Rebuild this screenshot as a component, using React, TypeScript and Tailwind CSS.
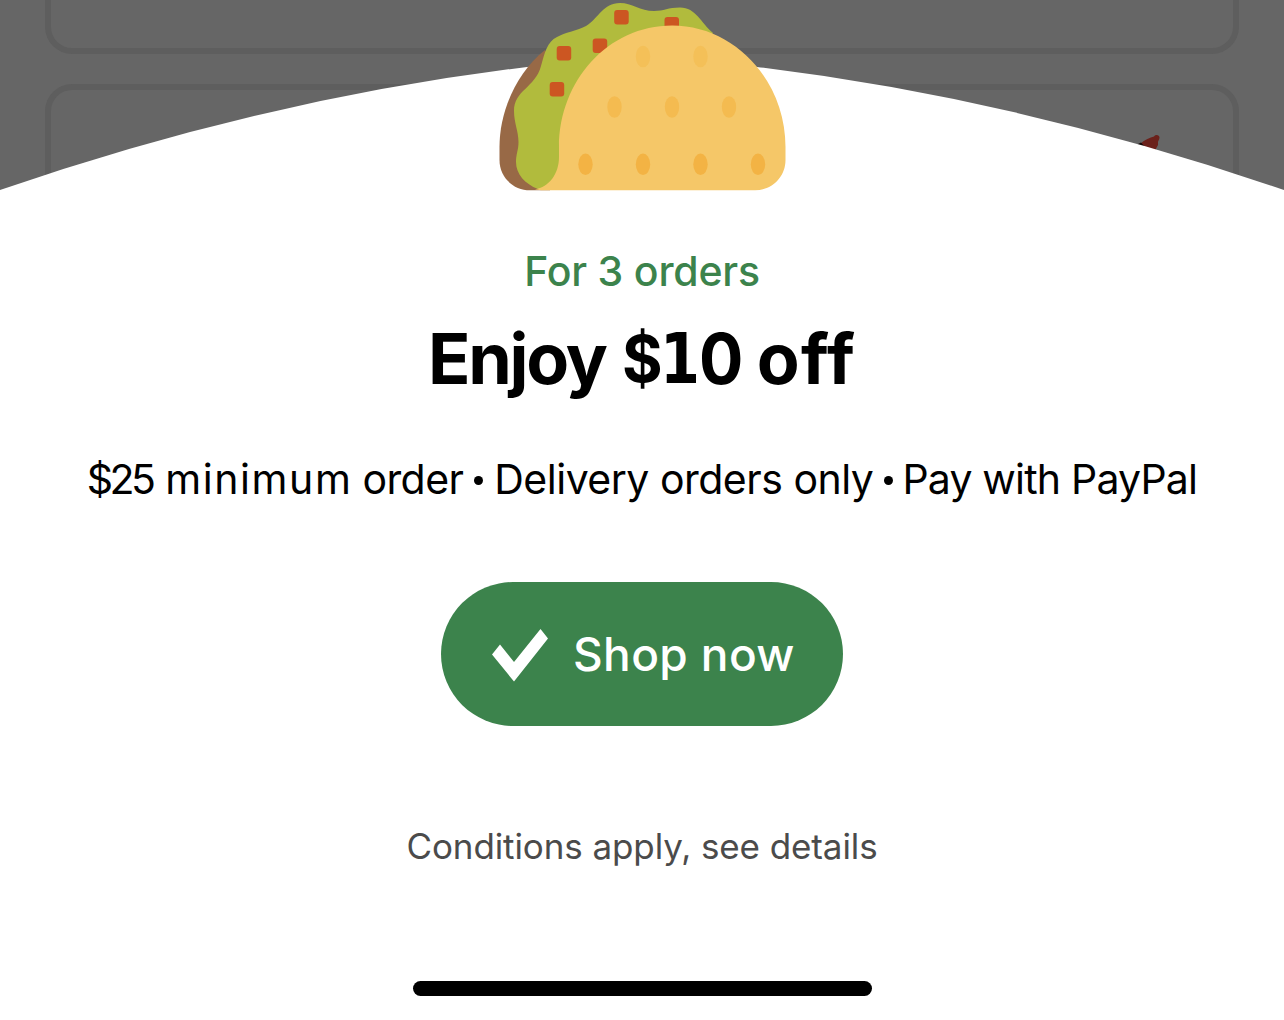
interface Point {
    x: number;
    y: number;
}

const TOMATOES: Point[] = [
    { x: 614.2, y: 10 },
    { x: 592.7, y: 38.5 },
    { x: 556.7, y: 46 },
    { x: 549.7, y: 82 },
    { x: 664.5, y: 17 },
];

// Toasted spots on the shell, darker towards the bottom
const SPOTS: (Point & { fill: string })[] = [
    { x: 643, y: 56.5, fill: "#f4c058" },
    { x: 700.5, y: 56.5, fill: "#f4c058" },
    { x: 614.5, y: 107, fill: "#f4bb50" },
    { x: 672, y: 107, fill: "#f4bb50" },
    { x: 729, y: 107, fill: "#f4bb50" },
    { x: 585.5, y: 164.3, fill: "#f3b344" },
    { x: 643, y: 164.3, fill: "#f3b344" },
    { x: 700.5, y: 164.3, fill: "#f3b344" },
    { x: 758, y: 164.3, fill: "#f3b344" },
];

function Taco() {
    return (
        <svg
            className="absolute left-[494px] top-0 h-[196px] w-[296px]"
            viewBox="494 0 296 196"
            aria-hidden="true"
        >
            {/* Back shell */}
            <path
                d="M545 50C515 74 499.500 113 499.500 147V160C499.500 177 513 190.300 530 190.300H550L570 100Z"
                fill="#986946"
            />
            {/* Lettuce */}
            <path
                d="M538 189C525 184 516 174 516 162C516 154 518.500 150 518.500 142C518.500 131 514 123 514 111C514 90 535 88 541 66C545 52 547 42 557 37C565 32.500 576 31 586 26C599 18 603 3 620 3C632 3 640 11 654 11C664 11 668 7.500 680 7.500C696 7.500 701 23 713 33L650 110L559 190Z"
                fill="#b1bb3d"
            />
            {TOMATOES.map((t) => (
                <rect
                    key={`${t.x}-${t.y}`}
                    x={t.x}
                    y={t.y}
                    width="14.5"
                    height="14.5"
                    rx="3"
                    fill="#cc5622"
                />
            ))}
            {/* Front shell */}
            <path
                d="M535 189.300C549 187 559 174 559 157V147C559 81 608 25.500 672 25.500C735 25.500 785.500 81 785.500 147V160C785.500 177 772 190.300 755 190.300H541Z"
                fill="#f5c768"
            />
            {SPOTS.map((s) => (
                <ellipse key={`${s.x}-${s.y}`} cx={s.x} cy={s.y} rx="7.2" ry="10.8" fill={s.fill} />
            ))}
        </svg>
    );
}

function DimmedFeed() {
    return (
        <div className="relative h-[190px] shrink-0">
            <div className="flex h-[190px] flex-col gap-[30px] overflow-hidden bg-[#666666] px-[45px]">
                <div className="h-[54px] shrink-0 rounded-b-[27px] border-6 border-t-0 border-[#5e5e5e]" />
                <div className="h-[160px] shrink-0 rounded-t-[27px] border-6 border-b-0 border-[#5e5e5e]" />
            </div>
            <svg
                className="absolute left-0 top-0 h-[190px] w-[1284px]"
                viewBox="0 0 1284 190"
                aria-hidden="true"
            >
                {/* Chili tip peeking over the sheet */}
                <path
                    d="M1140 144C1145 139.500 1150 137.500 1154 136.500C1156 134 1159.500 135 1159.500 137.500C1159.500 140 1157.500 141 1158 143.500C1158.500 146 1156 147 1155 152H1142Z"
                    fill="#6b211b"
                />
                <path d="M1136 145L1141 142.500L1147 149H1134Z" fill="#120808" />
                <path
                    d="M0 190Q263.500 98.900 527 67Q642 55 757 67Q1020.500 98.900 1284 190Z"
                    fill="#ffffff"
                />
            </svg>
            <Taco />
        </div>
    );
}

function Dot() {
    return <span className="mt-[3px] size-[9px] shrink-0 rounded-full bg-black" />;
}

export default function App() {
    return (
        <main className="flex h-[1020px] w-[1284px] flex-col overflow-hidden bg-white font-['Inter',sans-serif] text-black">
            <DimmedFeed />
            <section className="flex flex-1 flex-col items-center whitespace-nowrap">
                <p className="mt-[56px] text-[41px] leading-[50px] font-medium tracking-[-0.2px] text-[#3c834c]">
                    For 3 orders
                </p>
                <h1 className="mt-[22px] flex text-[70px] leading-[82px] font-bold">
                    <span className="tracking-[-2.2px]">Enjoy</span>
                    <span className="ml-[16px] inline-block w-[41px] origin-left scale-x-[0.97] text-[64px]">$</span>
                    <span className="-ml-[3px] inline-block w-[42px] origin-left scale-x-[0.82] font-['DejaVu_Sans',sans-serif]">
                        1
                    </span>
                    <span className="-ml-[3px] inline-block w-[43px] origin-left scale-x-[0.94]">0</span>
                    <span className="ml-[15px] tracking-[1.2px]">off</span>
                </h1>
                <p className="mt-[54px] flex items-center gap-[11px] text-[41px] leading-[50px]">
                    <span className="flex gap-[11px]">
                        <span className="mr-[2px] tracking-[-3.6px]">$25</span>
                        <span className="tracking-[1.6px]">minimum</span>
                        <span className="-ml-[1px] tracking-[-0.6px]">order</span>
                    </span>
                    <Dot />
                    <span className="tracking-[-0.5px]">Delivery orders only</span>
                    <Dot />
                    <span className="-ml-[2px] tracking-[-0.8px]">Pay with PayPal</span>
                </p>
                <button className="mt-[78px] flex h-[144px] w-[402px] items-center rounded-full bg-[#3c834c] pl-[51px] text-white">
                    <svg className="mt-[2px] h-[54px] w-[57px]" viewBox="0 0 57 54" aria-hidden="true">
                        <path d="M0 26.500L8 16.500L22 34L48.500 1L56 10.500L22 53.500Z" fill="currentColor" />
                    </svg>
                    <span className="ml-[24px] text-[46px] leading-[56px] font-medium tracking-[0.4px]">
                        Shop now
                    </span>
                </button>
                <p className="mt-[98px] text-[35px] leading-[44px] tracking-[-0.1px] text-[#4b4b4b]">
                    Conditions apply, see details
                </p>
                <div className="mt-[113px] h-[15px] w-[459px] rounded-full bg-black" />
            </section>
        </main>
    );
}
